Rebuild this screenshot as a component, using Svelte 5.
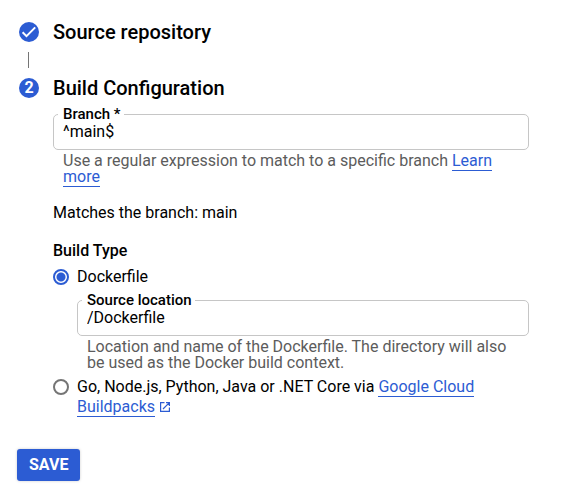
<script>
  let branch = $state('^main$');
  let source = $state('/Dockerfile');
  let buildType = $state('dockerfile');
</script>

<main>
  <section class="step">
    <svg class="badge" viewBox="0 0 20 20" aria-hidden="true">
      <circle cx="10" cy="10" r="10" />
      <path d="M3.6 10.2l3.9 3.9 8.7-8.7" />
    </svg>
    <h2>Source repository</h2>
  </section>

  <div class="connector"></div>

  <section class="step">
    <span class="badge number">2</span>
    <h2>Build Configuration</h2>
  </section>

  <form onsubmit={(e) => e.preventDefault()}>
    <div class="body">
      <fieldset class="field">
        <legend><label for="branch">Branch *</label></legend>
        <input id="branch" type="text" bind:value={branch} />
      </fieldset>
      <p class="hint">
        Use a regular expression to match to a specific branch <a href="#learn">Learn more</a>
      </p>

      <p class="matches">Matches the branch: main</p>

      <h3 id="build-type">Build Type</h3>
      <div role="radiogroup" aria-labelledby="build-type">
        <div class="option">
          <input id="dockerfile" type="radio" name="type" value="dockerfile" bind:group={buildType} />
          <label for="dockerfile">Dockerfile</label>
        </div>
        <div class="nested">
          <fieldset class="field">
            <legend><label for="source">Source location</label></legend>
            <input id="source" type="text" bind:value={source} />
          </fieldset>
          <p class="hint">
            Location and name of the Dockerfile. The directory will also be used as the Docker build
            context.
          </p>
        </div>
        <div class="option">
          <input id="buildpacks" type="radio" name="type" value="buildpacks" bind:group={buildType} />
          <label for="buildpacks">
            Go, Node.js, Python, Java or .NET Core via <a href="#buildpacks-docs">Google Cloud Buildpacks</a>
            <svg class="external" viewBox="0 0 12 12" aria-hidden="true">
              <path d="M5.5 1.6H1.6v8.8h8.8V6.5M7 1.6h3.4V5M10.4 1.6L4 8" />
            </svg>
          </label>
        </div>
      </div>
    </div>
    <button type="submit">SAVE</button>
  </form>
</main>

<style>
  :global(body) {
    margin: 0;
    background: #fff;
  }

  main {
    padding: 20px 51px 16px 17px;
    font: 400 16px/20px Roboto, sans-serif;
    color: #000;
  }

  h2,
  h3,
  p {
    margin: 0;
  }

  .step {
    display: flex;
    align-items: center;
    gap: 14px;
    padding-left: 2px;
  }

  h2 {
    font-size: 20px;
    line-height: 24px;
    font-weight: 500;
  }

  .badge {
    flex: none;
    width: 20px;
    height: 20px;
  }

  .badge circle {
    fill: #2c5cd3;
  }

  .badge path {
    fill: none;
    stroke: #fff;
    stroke-width: 2;
  }

  .number {
    border-radius: 50%;
    background: #2c5cd3;
    color: #fff;
    font-weight: 700;
    text-align: center;
  }

  .connector {
    width: 1px;
    height: 16px;
    margin: 8px 0 8px 11px;
    background: #757575;
  }

  .body {
    padding: 6px 0 0 36px;
  }

  .field {
    min-width: 0;
    margin: 0;
    padding: 1px 9px 8px 4px;
    border: 1px solid #c6c6c6;
    border-radius: 5px;
  }

  legend {
    padding: 0 3px 0 5px;
    font-size: 15px;
    line-height: 16px;
    font-weight: 500;
  }

  legend label {
    display: block;
  }

  .field input {
    display: block;
    box-sizing: border-box;
    width: 100%;
    height: 18px;
    padding: 0 0 0 5px;
    border: 0;
    outline: 0;
    background: none;
    font: inherit;
    line-height: 18px;
    color: inherit;
  }

  .hint {
    padding: 3px 10px 0;
    line-height: 16px;
    color: #5c5c5c;
  }

  a {
    border-bottom: 1px solid #2c5cd3;
    color: #2c5cd3;
    text-decoration: none;
  }

  .matches {
    margin-top: 18px;
  }

  h3 {
    margin: 18px 0 6px;
    font-size: 16px;
    line-height: 20px;
    font-weight: 500;
  }

  .option {
    display: flex;
    align-items: flex-start;
    gap: 8px;
  }

  .option input {
    flex: none;
    appearance: none;
    box-sizing: border-box;
    width: 16px;
    height: 16px;
    margin: 2px 0 0;
    border: 2px solid #757575;
    border-radius: 50%;
  }

  .option input:checked {
    border-color: #2c5cd3;
    background: radial-gradient(circle, #2c5cd3 4px, transparent 5px);
  }

  .nested {
    padding: 5px 0 6px 24px;
  }

  .external {
    width: 12px;
    height: 12px;
    vertical-align: -1px;
  }

  .external path {
    fill: none;
    stroke: #2c5cd3;
    stroke-width: 1.2;
  }

  button {
    display: block;
    height: 32px;
    margin-top: 32px;
    padding: 0 12px;
    border: 0;
    border-radius: 3px;
    background: #2c5cd3;
    box-shadow: 0 0 3px rgba(0, 0, 0, 0.2);
    color: #fff;
    font: 700 16px/32px Roboto, sans-serif;
  }
</style>
